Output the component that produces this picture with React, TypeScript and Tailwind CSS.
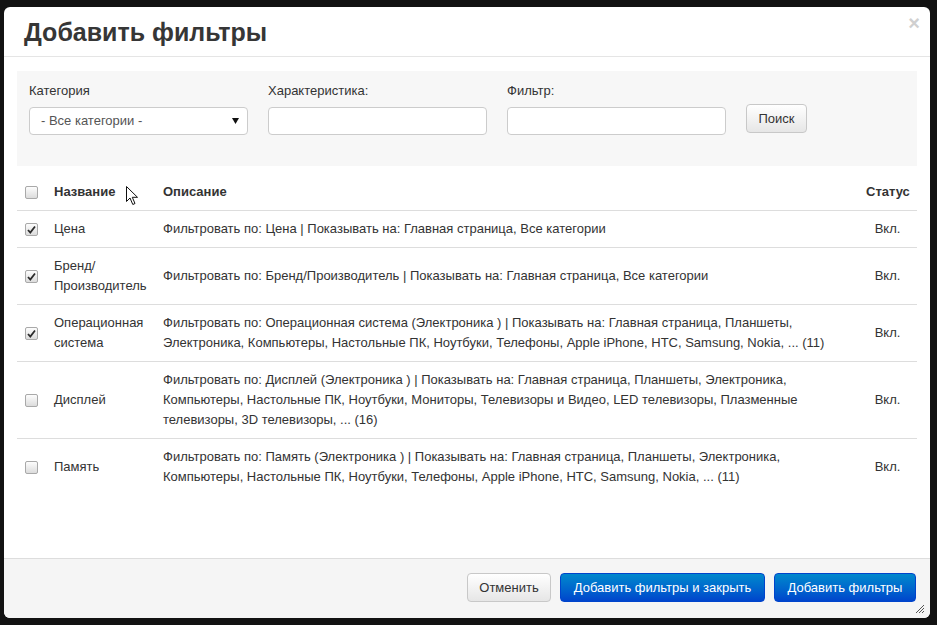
import React from "react";

/* ---------- data ---------- */
type Row = {
  id: number;
  name: string[];
  desc: string[];
  checked: boolean;
};

const rows: Row[] = [
  {
    id: 1,
    name: ["Цена"],
    desc: ["Фильтровать по: Цена | Показывать на: Главная страница, Все категории"],
    checked: true,
  },
  {
    id: 2,
    name: ["Бренд/", "Производитель"],
    desc: ["Фильтровать по: Бренд/Производитель | Показывать на: Главная страница, Все категории"],
    checked: true,
  },
  {
    id: 3,
    name: ["Операционная", "система"],
    desc: [
      "Фильтровать по: Операционная система (Электроника ) | Показывать на: Главная страница, Планшеты,",
      "Электроника, Компьютеры, Настольные ПК, Ноутбуки, Телефоны, Apple iPhone, HTC, Samsung, Nokia, ... (11)",
    ],
    checked: true,
  },
  {
    id: 4,
    name: ["Дисплей"],
    desc: [
      "Фильтровать по: Дисплей (Электроника ) | Показывать на: Главная страница, Планшеты, Электроника,",
      "Компьютеры, Настольные ПК, Ноутбуки, Мониторы, Телевизоры и Видео, LED телевизоры, Плазменные",
      "телевизоры, 3D телевизоры, ... (16)",
    ],
    checked: false,
  },
  {
    id: 5,
    name: ["Память"],
    desc: [
      "Фильтровать по: Память (Электроника ) | Показывать на: Главная страница, Планшеты, Электроника,",
      "Компьютеры, Настольные ПК, Ноутбуки, Телефоны, Apple iPhone, HTC, Samsung, Nokia, ... (11)",
    ],
    checked: false,
  },
];

/* ---------- small pieces ---------- */
function Check({ checked }: { checked?: boolean }) {
  return (
    <span className="flex h-[13px] w-[13px] items-center justify-center rounded-[2px] border border-[#a9a9a9] bg-linear-to-b from-[#fdfdfd] to-[#dcdcdc]">
      {checked && (
        <svg width="9" height="9" viewBox="0 0 9 9">
          <path d="M1 5 L3.3 7.5 L8 1.5" fill="none" stroke="#2b2b2b" strokeWidth="1.8" />
        </svg>
      )}
    </span>
  );
}

function Field({ label, children }: { label: string; children: React.ReactNode }) {
  return (
    <div className="w-[219px]">
      <div className="mb-[7px] h-[18px] leading-[18px] text-[13px] text-[#333]">{label}</div>
      {children}
    </div>
  );
}

export default function App() {
  return (
    <div className="relative h-[625px] w-[937px] overflow-hidden bg-[#121212] pl-[4px] pt-[7px] font-['Liberation_Sans',Arial,sans-serif] text-[#333]">
      <div className="relative flex h-[611px] w-[926px] flex-col overflow-hidden rounded-[6px] bg-white">
        {/* header */}
        <div className="relative flex h-[50px] items-center border-b border-[#e5e5e5] px-[20px]">
          <h3 className="pt-[2px] text-[25px] font-bold text-[#363636]">Добавить фильтры</h3>
          <span className="absolute right-[10px] top-[6px] text-[20px] font-bold leading-[20px] text-[#d0d0d0]">×</span>
        </div>

        {/* body */}
        <div className="flex-1 px-[13px] pt-[14px]">
          <div className="flex h-[95px] items-start gap-[20px] bg-[#f7f7f7] px-[12px] pt-[11px]">
            <Field label="Категория">
              <div className="flex h-[28px] items-center justify-between rounded-[4px] border border-[#ccc] bg-white pl-[11px] pr-[8px] text-[13px] text-[#555]">
                <span>- Все категории -</span>
                <svg width="7" height="6" viewBox="0 0 7 6">
                  <path d="M0 0 H7 L3.5 6 Z" fill="#111" />
                </svg>
              </div>
            </Field>
            <Field label="Характеристика:">
              <div className="h-[28px] rounded-[4px] border border-[#ccc] bg-white" />
            </Field>
            <Field label="Фильтр:">
              <div className="h-[28px] rounded-[4px] border border-[#ccc] bg-white" />
            </Field>
            <button className="mt-[22px] h-[29px] w-[61px] rounded-[4px] border border-[#c8c8c8] bg-linear-to-b from-white to-[#e6e6e6] text-[13px] text-[#333]">
              Поиск
            </button>
          </div>

          <table className="mt-[8px] w-full table-fixed border-collapse text-[13px] leading-[20px]">
            <colgroup>
              <col className="w-[29px]" />
              <col className="w-[109px]" />
              <col />
              <col className="w-[59px]" />
            </colgroup>
            <thead>
              <tr>
                <th className="px-[8px] py-[8px] text-left">
                  <Check />
                </th>
                <th className="px-[8px] py-[8px] text-left font-bold">Название</th>
                <th className="px-[8px] py-[8px] text-left font-bold">Описание</th>
                <th className="px-[8px] py-[8px] text-center font-bold">Статус</th>
              </tr>
            </thead>
            <tbody>
              {rows.map((r) => (
                <tr key={r.id} className="border-t border-[#ddd]">
                  <td className="px-[8px] py-[8px] align-middle">
                    <Check checked={r.checked} />
                  </td>
                  <td className="px-[8px] py-[8px] align-middle">
                    {r.name.map((n, i) => (
                      <div key={i}>{n}</div>
                    ))}
                  </td>
                  <td className="whitespace-nowrap px-[8px] py-[8px] align-middle">
                    {r.desc.map((d, i) => (
                      <div key={i}>{d}</div>
                    ))}
                  </td>
                  <td className="px-[8px] py-[8px] text-center align-middle">Вкл.</td>
                </tr>
              ))}
            </tbody>
          </table>
        </div>

        {/* footer */}
        <div className="relative flex h-[60px] items-start justify-end gap-[9px] border-t border-[#ddd] bg-[#f5f5f5] pr-[14px] pt-[14px]">
          <button className="h-[29px] w-[84px] rounded-[4px] border border-[#c8c8c8] bg-linear-to-b from-white to-[#e6e6e6] text-[13px] text-[#333]">
            Отменить
          </button>
          <button className="h-[29px] w-[205px] rounded-[4px] border border-[#0044cc] bg-linear-to-b from-[#0088cc] to-[#0044cc] text-[13px] text-white">
            Добавить фильтры и закрыть
          </button>
          <button className="h-[29px] w-[142px] rounded-[4px] border border-[#0044cc] bg-linear-to-b from-[#0088cc] to-[#0044cc] text-[13px] text-white">
            Добавить фильтры
          </button>
          <svg className="absolute bottom-[4px] right-[5px]" width="10" height="10" viewBox="0 0 10 10">
            <path d="M9 1 L1 9 M9 4 L4 9 M9 7 L7 9" stroke="#555" strokeWidth="1" />
          </svg>
        </div>
      </div>

      {/* mouse pointer */}
      <svg className="absolute left-[126px] top-[186px]" width="13" height="20" viewBox="0 0 13 20">
        <path d="M0.5 0.5 L0.5 15.5 L4 12 L6.8 18.5 L9 17.5 L6.3 11.3 L11.5 11.3 Z" fill="#fff" stroke="#111" strokeWidth="1" />
      </svg>
    </div>
  );
}
